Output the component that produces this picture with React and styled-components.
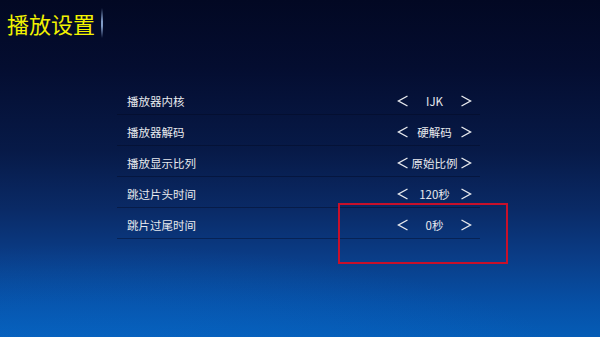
import React from "react";
import styled, { createGlobalStyle } from "styled-components";

const Global = createGlobalStyle`
  html, body { margin: 0; padding: 0; }
  body {
    width: 600px;
    height: 337px;
    overflow: hidden;
    font-family: "Noto Sans CJK SC", "Noto Sans", sans-serif;
  }
`;

const Page = styled.div`
  width: 600px;
  height: 337px;
  box-sizing: border-box;
  background:
    radial-gradient(ellipse 520px 160px at 15% 120%, rgba(10, 110, 210, 0.55), rgba(10, 110, 210, 0) 100%),
    linear-gradient(180deg, #020823 0%, #040d30 20%, #071a48 45%, #0a2a66 62%, #0a3c86 76%, #0650a6 90%, #055cb6 100%);
  display: flex;
  flex-direction: column;
`;

const Header = styled.header`
  display: flex;
  align-items: center;
  padding: 8px 0 0 7px;
  height: 30px;
`;

const Title = styled.h1`
  margin: 0;
  font-size: 22px;
  font-weight: 400;
  line-height: 30px;
  color: #f2f200;
  letter-spacing: 0;
`;

const Divider = styled.span`
  display: block;
  width: 2px;
  height: 30px;
  margin-left: 6px;
  background: linear-gradient(180deg, rgba(120,150,200,0) 0%, rgba(150,180,225,0.85) 45%, rgba(150,180,225,0.85) 60%, rgba(120,150,200,0) 100%);
`;

const List = styled.ul`
  list-style: none;
  margin: 46px 0 0 117px;
  padding: 0;
  width: 363px;
`;

const Row = styled.li`
  position: relative;
  height: 31px;
  box-sizing: border-box;
  padding: 4px 8px 0 10px;
  display: flex;
  align-items: center;
  border-bottom: 1px solid rgba(2, 8, 30, 0.4);
  color: #e8eaee;
  font-size: 11.5px;
`;

const Label = styled.span`
  flex: 1;
`;

const Control = styled.div`
  display: flex;
  align-items: center;
`;

const ArrowBox = styled.span`
  width: 12px;
  height: 12px;
  display: flex;
  align-items: center;
  justify-content: center;
`;

const Value = styled.span`
  width: 51px;
  text-align: center;
  white-space: nowrap;
  font-size: 11.5px;
`;

const Focus = styled.div`
  position: absolute;
  left: 221px;
  top: -5px;
  width: 170px;
  height: 61px;
  box-sizing: border-box;
  border: 2px solid #c8102a;
  pointer-events: none;
`;

const Arrow = ({ dir }) => (
  <ArrowBox>
    <svg width="12" height="12" viewBox="0 0 12 12">
      <polyline
        points={dir === "left" ? "10.5,1 1.5,6 10.5,11" : "1.5,1 10.5,6 1.5,11"}
        fill="none"
        stroke="#e8eaee"
        strokeWidth="1.4"
        strokeLinejoin="miter"
      />
    </svg>
  </ArrowBox>
);

const items = [
  ["播放器内核", "IJK"],
  ["播放器解码", "硬解码"],
  ["播放显示比列", "原始比例"],
  ["跳过片头时间", "120秒"],
  ["跳片过尾时间", "0秒"],
];

export default function App() {
  return (
    <>
      <Global />
      <Page>
        <Header>
          <Title>播放设置</Title>
          <Divider />
        </Header>
        <List>
          {items.map(([label, value], i) => (
            <Row key={label}>
              <Label>{label}</Label>
              <Control>
                <Arrow dir="left" />
                <Value>{value}</Value>
                <Arrow dir="right" />
              </Control>
              {i === items.length - 1 && <Focus />}
            </Row>
          ))}
        </List>
      </Page>
    </>
  );
}
